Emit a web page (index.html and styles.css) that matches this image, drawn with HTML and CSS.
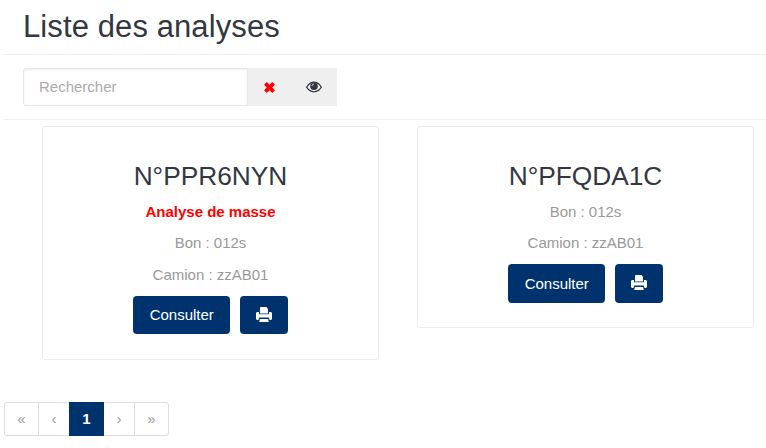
FILE: index.html
```html
<!DOCTYPE html>
<html lang="fr">
<head>
<meta charset="utf-8">
<title>Liste des analyses</title>
<link rel="stylesheet" href="styles.css">
</head>
<body>
<main class="page">
  <header class="heading"><h1>Liste des analyses</h1></header>
  <div class="toolbar">
    <input class="search" type="text" placeholder="Rechercher" aria-label="Rechercher">
    <div class="actions">
      <button class="tool" aria-label="Effacer"><svg class="cross" viewBox="0 0 12 12"><path d="M2.2 2.2 9.8 9.8M9.8 2.2 2.2 9.8"/></svg></button>
      <button class="tool" aria-label="Afficher"><svg class="eye" viewBox="0 0 16 12"><path d="M.6 6.2Q3.7 1.2 8 1.2t7.4 5Q12.3 10.8 8 10.8T.6 6.2Z"/><circle cx="8" cy="5.2" r="3.8"/><path d="M6 5Q6 3 8 3"/></svg></button>
    </div>
  </div>
  <section class="cards">
    <article class="card">
      <h2>N°PPR6NYN</h2>
      <p class="alert">Analyse de masse</p>
      <p>Bon : 012s</p>
      <p>Camion : zzAB01</p>
      <div class="buttons">
        <button class="btn">Consulter</button>
        <button class="btn print" aria-label="Imprimer"><svg viewBox="0 0 16 16"><path d="M4.5 0h6L12 2v4.6H4V1zM1 5h2v2.2h10V5h2l1 1v6l-1 1h-1.5l-.8-2.5H3.3L2.5 13H1l-1-1V6zM4 12h8l.8 3H3.2z"/></svg></button>
      </div>
    </article>
    <article class="card">
      <h2>N°PFQDA1C</h2>
      <p>Bon : 012s</p>
      <p>Camion : zzAB01</p>
      <div class="buttons">
        <button class="btn">Consulter</button>
        <button class="btn print" aria-label="Imprimer"><svg viewBox="0 0 16 16"><path d="M4.5 0h6L12 2v4.6H4V1zM1 5h2v2.2h10V5h2l1 1v6l-1 1h-1.5l-.8-2.5H3.3L2.5 13H1l-1-1V6zM4 12h8l.8 3H3.2z"/></svg></button>
      </div>
    </article>
  </section>
  <nav class="pages"><a>«</a><a>‹</a><a class="current">1</a><a>›</a><a>»</a></nav>
</main>
</body>
</html>
```
FILE: styles.css
```css
* { box-sizing: border-box; }
body { margin: 0; background: #fff; color: #999; font: 15px/21px "Liberation Sans", Arial, sans-serif; overflow: hidden; }
.page { padding-left: 4px; height: 448px; }
.heading { height: 55px; padding: 8px 19px 0; border-bottom: 1px solid #eee; }
h1, h2 { margin: 0; color: #333742; font-weight: 400; }
h1 { font-size: 31px; line-height: 37px; letter-spacing: .1px; }
.toolbar { display: flex; height: 65px; padding: 13px 19px; border-bottom: 1px solid #eee; }
.search { width: 225px; height: 38px; border: 1px solid #e8e8e8; border-radius: 3px 0 0 3px; padding: 0 15px 2px; font: inherit; color: #999; box-shadow: inset 0 1px 2px #eee; }
.search::placeholder { color: #aaa; opacity: 1; }
.actions { display: flex; width: 89px; background: #efefef; }
.tool { display: flex; align-items: center; justify-content: center; width: 42px; padding: 0; border: 0; background: none; }
.tool + .tool { width: 47px; }
.cross { width: 13px; height: 13px; fill: none; stroke: red; stroke-width: 3.6; }
.eye { width: 16px; height: 12px; fill: none; stroke: #333742; stroke-width: 1.2; }
.eye circle { fill: #333742; stroke: none; }
.eye path:last-child { stroke: #efefef; stroke-width: .8; }
.cards { display: grid; grid-template-columns: 337px 337px; column-gap: 38px; align-items: start; height: 282px; padding: 6px 0 0 38px; }
.card { border: 1px solid #ebebeb; border-radius: 3px; padding: 34px 16px 24.6px; text-align: center; }
h2 { font-size: 26.3px; line-height: 31px; margin-bottom: 8.9px; }
p { margin: 0 0 10.5px; }
.alert { color: red; font-weight: 700; }
.buttons { display: flex; justify-content: center; gap: 10px; padding-top: .4px; }
.btn { height: 38.4px; width: 97px; border: 0; border-radius: 4px; padding: 0; background: #00336d; color: #fff; font: inherit; }
.print { width: 47.5px; display: flex; align-items: center; justify-content: center; }
.print svg { width: 16px; height: 16px; fill: #fff; }
.pages { display: grid; grid-template-columns: 34px 31px 34px 31px 33px; width: 165px; height: 34px; border: 1px solid #ddd; border-radius: 3px; }
.pages a { text-align: center; line-height: 32px; border-right: 1px solid #ddd; }
.pages a:last-child { border: 0; }
.pages .current { background: #00336d; color: #fff; border: 0; margin: -1px 0 -1px -1px; line-height: 34px; font-weight: 700; }
```
